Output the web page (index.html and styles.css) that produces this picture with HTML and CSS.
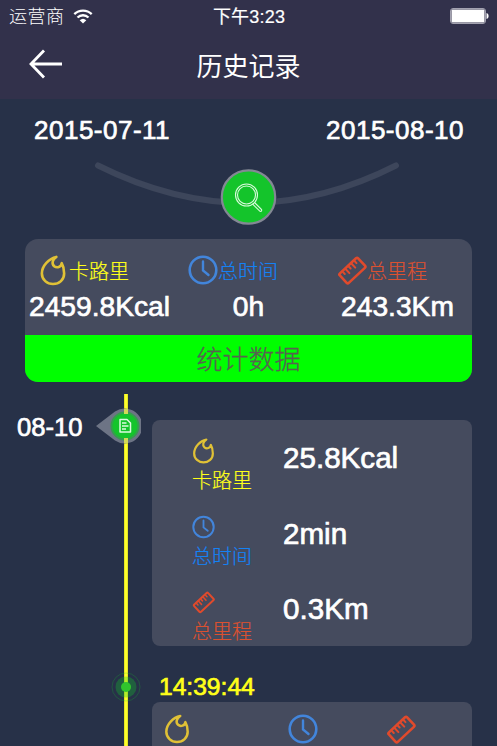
FILE: index.html
```html
<!DOCTYPE html>
<html lang="zh-CN">
<head>
    <meta charset="UTF-8">
    <meta name="viewport" content="width=device-width, initial-scale=1.0">
    <title>历史记录</title>
    <link rel="stylesheet" href="styles.css">
</head>
<body>
    <!-- Shared icons -->
    <svg class="icon-defs" width="0" height="0">
        <symbol id="icon-fire" viewBox="0 0 28 32">
            <path d="M17.5 2C10 3.5 2.5 11 2.5 19C2.5 25.5 8 30 14 30C20.5 30 25.5 25.5 25.5 19C25.5 15 24.5 11 23 8.5C22.5 12.5 18 13.8 15.2 11.5C12.3 9 13.5 4.5 17.5 2Z" fill="none" stroke="currentColor" stroke-width="2.7" stroke-linejoin="round"/>
        </symbol>
        <symbol id="icon-clock" viewBox="0 0 30 30">
            <circle cx="15" cy="15" r="13.3" fill="none" stroke="currentColor" stroke-width="2.6"/>
            <path d="M15 6.5V15.5L20.5 20" fill="none" stroke="currentColor" stroke-width="2.4" stroke-linecap="round"/>
        </symbol>
        <symbol id="icon-ruler" viewBox="0 0 30 30">
            <g transform="rotate(-43 15 15)" fill="none" stroke="currentColor" stroke-width="2.6" stroke-linecap="round">
                <rect x="2.4" y="9.2" width="25" height="13" rx="1.5"/>
                <path d="M7 9.5V13M11 9.5V15.5M15 9.5V13M19 9.5V15.5M23 9.5V13" stroke-width="2"/>
            </g>
        </symbol>
    </svg>

    <div class="header">
        <div class="status-bar">
            <div class="carrier">
                <span>运营商</span>
                <svg class="wifi" viewBox="0 0 20 15">
                    <path d="M1.3 5.2A12.5 12.5 0 0 1 18.7 5.2M4.5 8.5A7.8 7.8 0 0 1 15.5 8.5" fill="none" stroke="#fff" stroke-width="2.3"/>
                    <path d="M6.7 11.2A4.8 4.8 0 0 1 13.3 11.2L10 14.5Z" fill="#fff"/>
                </svg>
            </div>
            <div class="clock">下午3:23</div>
            <div class="battery-box">
                <svg class="battery" viewBox="0 0 39 16">
                    <rect x=".5" y=".5" width="35" height="15" rx="2.5" fill="none" stroke="#a3a2b0"/>
                    <rect x="1.5" y="1.5" width="33" height="13" rx="1" fill="#fff"/>
                    <path d="M36.5 5C39.3 5.5 39.3 10.5 36.5 11Z" fill="#fff"/>
                </svg>
            </div>
        </div>
        <div class="navbar">
            <a class="back" href="#">
                <svg width="34" height="30" viewBox="0 0 34 30">
                    <path d="M15 1.5L2 15L15 28.5M2 15H33" fill="none" stroke="#fff" stroke-width="2.8"/>
                </svg>
            </a>
            <h1>历史记录</h1>
        </div>
    </div>

    <div class="date-range">
        <div class="dates">
            <span class="num">2015-07-11</span>
            <span class="num">2015-08-10</span>
        </div>
        <svg class="search" width="310" height="76" viewBox="0 0 310 76">
            <path d="M5 16.5Q155 91.5 303 16.5" fill="none" stroke="#3d465b" stroke-width="6" stroke-linecap="round"/>
            <circle cx="155.5" cy="48" r="26.7" fill="#14c42b" stroke="#838894" stroke-width="2.2"/>
            <g fill="none" stroke="#d9fadc" stroke-width="1.1">
                <circle cx="153.5" cy="46" r="11"/>
                <circle cx="153.5" cy="46" r="9"/>
                <path d="M161.5 53.5L168.6 60.6Q169 62.9 167 62.3L159.7 55.2"/>
            </g>
        </svg>
    </div>

    <div class="summary">
        <div class="summary-items">
            <div class="summary-item yellow">
                <div class="label"><svg class="fire"><use href="#icon-fire"/></svg><span>卡路里</span></div>
                <div class="num">2459.8Kcal</div>
            </div>
            <div class="summary-item blue">
                <div class="label"><svg><use href="#icon-clock"/></svg><span>总时间</span></div>
                <div class="num">0h</div>
            </div>
            <div class="summary-item red">
                <div class="label"><svg><use href="#icon-ruler"/></svg><span>总里程</span></div>
                <div class="num">243.3Km</div>
            </div>
        </div>
        <div class="summary-title">统计数据</div>
    </div>

    <div class="timeline">
        <div class="day num">08-10</div>
        <div class="axis">
            <svg class="day-marker" width="46" height="36" viewBox="0 0 46 36">
                <path d="M1 18L20 3.5A17.5 17.5 0 1 1 20 32.5Z" fill="#6d7485"/>
                <circle cx="30" cy="18" r="14.5" fill="#389c50"/>
                <circle cx="30" cy="18" r="12.5" fill="#14c42b"/>
                <path d="M29 1H33V6H29ZM29 30H33V35H29Z" fill="#d3d957"/>
                <path d="M25 11.5H32L35.5 15V24H25Z" fill="none" stroke="#dcfbdf" stroke-width="1.5" stroke-linejoin="round"/>
                <path d="M27 15H31.5M27 18H33.5M27 21H31" fill="none" stroke="#dcfbdf" stroke-width="1.3"/>
            </svg>
            <svg class="time-marker" width="30" height="30" viewBox="0 0 30 30">
                <circle cx="15" cy="15" r="14" fill="none" stroke="#14c42b" stroke-opacity=".25"/>
                <circle cx="15" cy="15" r="10.5" fill="#14c42b" fill-opacity=".32"/>
                <circle cx="15" cy="15" r="5" fill="#30c52d"/>
            </svg>
        </div>
        <div class="records">
            <div class="record">
                <div class="record-row yellow">
                    <div class="type"><svg class="fire"><use href="#icon-fire"/></svg><span>卡路里</span></div>
                    <div class="num">25.8Kcal</div>
                </div>
                <div class="record-row blue">
                    <div class="type"><svg><use href="#icon-clock"/></svg><span>总时间</span></div>
                    <div class="num">2min</div>
                </div>
                <div class="record-row red">
                    <div class="type"><svg><use href="#icon-ruler"/></svg><span>总里程</span></div>
                    <div class="num">0.3Km</div>
                </div>
            </div>
            <div class="time num">14:39:44</div>
            <div class="record-next">
                <svg class="yellow fire"><use href="#icon-fire"/></svg>
                <svg class="blue"><use href="#icon-clock"/></svg>
                <svg class="red"><use href="#icon-ruler"/></svg>
            </div>
        </div>
    </div>
</body>
</html>
```
FILE: styles.css
```css
* {
    margin: 0;
    padding: 0;
    box-sizing: border-box;
}

body {
    height: 746px;
    overflow: hidden;
    background-color: #273148;
    color: #fff;
    font-family: "Liberation Sans", "Noto Sans CJK SC", sans-serif;
    font-weight: 300;
}

svg {
    display: block;
    flex-shrink: 0;
}

.icon-defs {
    position: absolute;
}

/* Helvetica medium look for digits */
.num {
    color: #fff;
    -webkit-text-stroke: 0.7px currentColor;
    white-space: nowrap;
}

.yellow { color: #ffff19; }
.blue { color: #1482f5; }
.red { color: #db5130; }

.yellow svg,
svg.yellow { color: #e0c136; }
.blue svg,
svg.blue { color: #4285db; }
.red svg,
svg.red { color: #e04a2c; }

/* Header */
.header {
    height: 99px;
    background-color: #32314b;
}

.status-bar {
    display: grid;
    grid-template-columns: 1fr auto 1fr;
    align-items: center;
    height: 32px;
    padding: 0 8px 0 9px;
    font-size: 18px;
}

.carrier {
    display: flex;
    align-items: center;
    gap: 8px;
    letter-spacing: 0.5px;
}

.carrier span {
    line-height: 22px;
    margin-top: 1px;
}

.wifi {
    width: 20px;
    height: 15px;
}

.clock {
    margin-top: -2px;
    font-size: 18px;
    font-weight: 400;
    letter-spacing: 0.2px;
    -webkit-text-stroke: 0.2px currentColor;
}

.battery-box {
    display: flex;
    justify-content: flex-end;
}

.battery {
    width: 39px;
    height: 16px;
}

.navbar {
    display: grid;
    grid-template-columns: 100px 1fr 100px;
    align-items: center;
    height: 67px;
}

.back {
    padding: 0 0 3px 29px;
}

.navbar h1 {
    padding-bottom: 2px;
    font-size: 26px;
    font-weight: 400;
    text-align: center;
}

/* Date range */
.date-range {
    height: 140px;
    padding: 15px 33px 0 34px;
}

.dates {
    display: flex;
    justify-content: space-between;
    height: 35px;
    font-size: 26px;
    letter-spacing: 0.5px;
    line-height: 32px;
}

.search {
    margin-left: 59px;
}

/* Summary card */
.summary {
    width: 447px;
    height: 143px;
    margin-left: 25px;
    border-radius: 13px;
    background-color: #454b5e;
    overflow: hidden;
}

.summary-items {
    display: grid;
    grid-template-columns: 149px 149px 149px;
    height: 96px;
    padding-top: 14px;
}

.summary-item {
    text-align: center;
}

.label {
    display: flex;
    align-items: center;
    height: 34px;
    padding-left: 14px;
    font-size: 20px;
    -webkit-text-stroke: 0.2px currentColor;
}

.label svg {
    width: 30px;
    height: 30px;
}

.label .fire {
    width: 28px;
    height: 31px;
    margin-right: 2px;
}

.summary-item .num {
    font-size: 28.2px;
    line-height: 38px;
}

.summary-title {
    height: 47px;
    padding-top: 2px;
    background-color: #00ff00;
    color: #596052;
    font-size: 26px;
    line-height: 46px;
    text-align: center;
    -webkit-text-stroke: 0.3px currentColor;
}

/* Timeline */
.timeline {
    display: grid;
    grid-template-columns: 95px 57px 320px;
    height: 352px;
    margin-top: 12px;
}

.day {
    padding: 16px 0 0 17px;
    font-size: 25.6px;
    line-height: 34px;
}

.axis {
    padding-top: 14px;
    background: linear-gradient(90deg, #c9cc25, #ffff2a 25%, #ffff2a 75%, #c9cc25) 29px 0 / 4px 100% no-repeat;
}

.time-marker {
    margin: 228px 0 0 16px;
}

.records {
    padding-top: 26px;
}

.record {
    height: 226px;
    padding: 18px 0 0 40px;
    border-radius: 8px;
    background-color: #454b5e;
}

.record-row {
    display: grid;
    grid-template-columns: 91px 1fr;
    height: 75.5px;
}

.type {
    font-size: 20px;
    line-height: 34px;
    -webkit-text-stroke: 0.2px currentColor;
}

.type svg {
    width: 23px;
    height: 26px;
}

.record-row .num {
    font-size: 29.6px;
    line-height: 40px;
}

.time {
    height: 56px;
    padding: 24px 0 0 7px;
    color: #ffff19;
    font-size: 24.6px;
    line-height: 34px;
}

.record-next {
    display: grid;
    grid-template-columns: 124px 98px 1fr;
    height: 60px;
    padding: 12px 0 0 12px;
    border-radius: 8px;
    background-color: #454b5e;
}

.record-next svg {
    width: 30px;
    height: 30px;
}

.record-next .fire {
    width: 26px;
}
```
